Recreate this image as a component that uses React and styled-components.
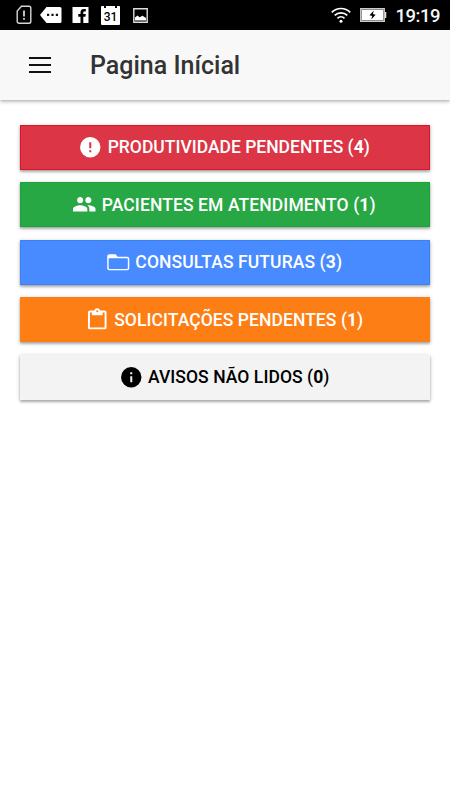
import styled, { createGlobalStyle } from "styled-components";

const GlobalStyle = createGlobalStyle`
  * {
    box-sizing: border-box;
  }
  body {
    margin: 0;
    background: #fff;
    font-family: Roboto, "Liberation Sans", sans-serif;
  }
`;

const icons = {
  alert: (
    <path d="M12 2a10 10 0 1 0 0 20 10 10 0 0 0 0-20zm1 15h-2v-2h2v2zm0-4h-2V7h2v6z" />
  ),
  people: (
    <path d="M16 11c1.66 0 2.99-1.34 2.99-3S17.66 5 16 5s-3 1.34-3 3 1.34 3 3 3zm-8 0c1.66 0 2.99-1.34 2.99-3S9.66 5 8 5 5 6.34 5 8s1.34 3 3 3zm0 2c-2.33 0-7 1.17-7 3.5V19h14v-2.500c0-2.330-4.670-3.500-7-3.500zm8 0c-.29 0-.62.02-.97.05 1.160.84 1.970 1.970 1.970 3.450V19h6v-2.500c0-2.330-4.670-3.500-7-3.500z" />
  ),
  folder: (
    <path
      fillRule="evenodd"
      d="M3.200 4.200h6.200l2 2.300h9.400a2 2 0 0 1 2 2v9.400a2 2 0 0 1-2 2H3.200a2 2 0 0 1-2-2V6.200a2 2 0 0 1 2-2zM3.400 8.100a.8.8 0 0 0-.8.8v8.700c0 .5.300.9.800.9h17.200c.5 0 .8-.4.800-.9V8.900a.8.8 0 0 0-.8-.8z"
    />
  ),
  clipboard: (
    <path
      fillRule="evenodd"
      d="M19.200 3.400h-4.300a3 3 0 0 0-5.800 0H4.800A2 2 0 0 0 2.900 5.300v14.700c0 1.060.84 1.900 1.900 1.900h14.400a1.900 1.900 0 0 0 1.900-1.900V5.300a1.900 1.900 0 0 0-1.900-1.900zM12 3.100a1 1 0 1 1 0 2 1 1 0 0 1 0-2zM4.800 20V5.300h1.900v2.900h10.600V5.300h1.900V20z"
    />
  ),
  info: (
    <path d="M12 2a10 10 0 1 0 0 20 10 10 0 0 0 0-20zm1 15h-2v-6h2v6zm0-8h-2V7h2v2z" />
  ),
};

const buttons = [
  { icon: "alert", label: "PRODUTIVIDADE PENDENTES", count: 4, bg: "#dc3545", edge: "#dc1226" },
  { icon: "people", label: "PACIENTES EM ATENDIMENTO", count: 1, bg: "#28a745", edge: "#18a538", spacing: 0.1 },
  { icon: "folder", label: "CONSULTAS FUTURAS", count: 3, bg: "#488aff", edge: "#3a82f2", spacing: 0.1 },
  { icon: "clipboard", label: "SOLICITAÇÕES PENDENTES", count: 1, bg: "#fd7e14", edge: "#fd7e14", spacing: 0.06 },
  { icon: "info", label: "AVISOS NÃO LIDOS", count: 0, bg: "#f3f3f3", edge: "#f3f3f3", color: "#000", spacing: 0.06 },
];

const App = () => {
  return (
    <>
      <GlobalStyle />
      <StatusBar>
        <Notifications>
          <svg width="16" height="20" viewBox="0 0 16 20">
            <path
              d="M5.500 1.200H13a1.800 1.800 0 0 1 1.800 1.800v13.500a1.800 1.800 0 0 1-1.800 1.800H3a1.800 1.800 0 0 1-1.800-1.800V6z"
              fill="none"
              stroke="#d5d5d5"
              strokeWidth="1.400"
            />
            <path d="M7.200 5.500h1.600v6H7.200zM7.200 13h1.600v1.700H7.200z" fill="#eee" />
          </svg>
          <svg width="22" height="16" viewBox="0 0 22 16">
            <path
              d="M6.500 0H20a1.500 1.500 0 0 1 1.500 1.500v13A1.500 1.500 0 0 1 20 16H6.500L.5 8.700V7.300z"
              fill="#fff"
            />
            <path d="M7 6.800h2.200V9H7zM11.400 6.800h2.200V9h-2.200zM15.800 6.800H18V9h-2.200z" fill="#111" />
          </svg>
          <svg width="17" height="16" viewBox="0 0 17 16">
            <path d="M.5 0h16v16H.5z" fill="#fff" />
            <path
              d="M8.500 16V9.700H6.300V7.100h2.200V5.300c0-2.200 1.300-3.400 3.300-3.400h2v2.500h-1.300c-.9 0-1.200.4-1.200 1.200v1.500h2.500l-.4 2.600h-2.100V16z"
              fill="#000"
            />
          </svg>
          <Calendar>
            <i />
            <span>31</span>
            <i />
          </Calendar>
          <svg width="15" height="15" viewBox="0 0 15 15">
            <path d="M.8.8h13.400v13.400H.8z" fill="none" stroke="#ddd" strokeWidth="1.400" />
            <path d="M2 12.500V9.500l2.500-2 2 1.800 3-1.500L13 10v2.500z" fill="#fff" />
          </svg>
        </Notifications>
        <System>
          <svg width="20" height="16" viewBox="0 0 20 16">
            <g fill="none" stroke="#fff" strokeWidth="1.700">
              <path d="M.8 5.300a13 13 0 0 1 18.400 0" />
              <path d="M3.700 8.400a9 9 0 0 1 12.600 0" />
              <path d="M6.500 11.300a5 5 0 0 1 7 0" />
            </g>
            <circle cx="10" cy="14.200" r="1.500" fill="#fff" />
          </svg>
          <svg width="27" height="14" viewBox="0 0 27 14">
            <path d="M.7.7h23.600v12.600H.7z" fill="#777" stroke="#ccc" strokeWidth="1.300" />
            <path d="M2 2h21v10H2z" fill="#fff" />
            <path d="M25 4h1.300v6H25z" fill="#ddd" />
            <path d="M13.800 2.500 9.500 7.200l2.700.7-1 3.600 4.400-4.800-2.700-.7z" fill="#000" />
          </svg>
          <Clock>19:19</Clock>
        </System>
      </StatusBar>
      <Header>
        <MenuButton aria-label="Menu">
          <span />
          <span />
          <span />
        </MenuButton>
        <Title>Pagina Inícial</Title>
      </Header>
      <Content>
        {buttons.map((item) => (
          <Button
            key={item.label}
            $bg={item.bg}
            $edge={item.edge}
            $color={item.color}
            $spacing={item.spacing}
          >
            <Icon viewBox="0 0 24 24">{icons[item.icon]}</Icon>
            <span>
              {item.label} (<b>{item.count}</b>)
            </span>
          </Button>
        ))}
      </Content>
    </>
  );
};

const StatusBar = styled.div`
  height: 30px;
  padding: 0 10px 0 16px;
  display: flex;
  align-items: center;
  justify-content: space-between;
  background: #000;
  svg {
    display: block;
  }
`;

const Notifications = styled.div`
  display: flex;
  align-items: center;
  svg:nth-child(1) {
    margin-right: 2px;
    margin-top: -1px;
  }
  svg:nth-child(2) {
    margin-right: 10px;
    margin-left: 6px;
  }
  svg:nth-child(5) {
    margin-left: 13px;
    margin-top: 1px;
  }
`;

const Calendar = styled.div`
  width: 19px;
  height: 19px;
  margin-left: 12px;
  display: flex;
  justify-content: space-between;
  padding: 0 3px;
  border-radius: 1px;
  background: #fff;
  i {
    width: 2px;
    height: 2px;
    background: #000;
  }
  span {
    margin: 5px -3px 0;
    font-size: 12px;
    line-height: 13px;
    font-weight: 500;
    color: #000;
  }
`;

const System = styled.div`
  display: flex;
  align-items: center;
  gap: 9px;
`;

const Clock = styled.span`
  font-size: 18.5px;
  font-weight: 500;
  line-height: 30px;
  letter-spacing: -0.5px;
  color: #f5f5f5;
  padding-top: 2px;
`;

const Header = styled.header`
  height: 70px;
  padding-left: 29px;
  display: flex;
  align-items: center;
  background: #f8f8f8;
  box-shadow: 0 1px 4px rgba(0, 0, 0, 0.4);
`;

const MenuButton = styled.button`
  width: 22px;
  height: 16px;
  padding: 0;
  border: 0;
  background: none;
  display: flex;
  flex-direction: column;
  justify-content: space-between;
  span {
    height: 2px;
    background: #111;
  }
`;

const Title = styled.h1`
  margin: 1px 0 0 39px;
  font-size: 25px;
  line-height: 31px;
  font-weight: 500;
  color: #333;
`;

const Content = styled.main`
  padding: 25px 20px;
  display: flex;
  flex-direction: column;
  gap: 12.48px;
`;

const Button = styled.button`
  height: 45px;
  padding: 0 1px 1px 0;
  display: flex;
  align-items: center;
  justify-content: center;
  gap: 5px;
  border: 1px solid ${(props) => props.$edge};
  background: ${(props) => props.$bg};
  color: ${(props) => props.$color || "#fff"};
  font-family: inherit;
  font-size: 17.5px;
  font-weight: 500;
  line-height: 20px;
  letter-spacing: ${(props) => props.$spacing || 0}px;
  box-shadow: 0 2px 2px rgba(0, 0, 0, 0.2), 0 1px 4px rgba(0, 0, 0, 0.25);
  span {
    margin-top: 0.2px;
  }
  b {
    font-weight: 700;
  }
`;

const Icon = styled.svg`
  width: 24.5px;
  height: 24.5px;
  flex: none;
  margin-left: -1px;
  fill: currentColor;
`;

export default App;
